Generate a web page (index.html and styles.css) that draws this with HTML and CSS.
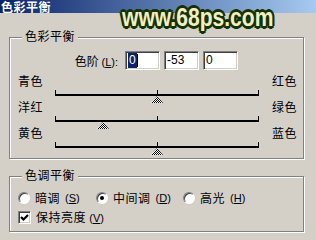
FILE: index.html
```html
<!DOCTYPE html>
<html lang="zh-CN">
<head>
    <meta charset="UTF-8">
    <title>色彩平衡</title>
    <link rel="stylesheet" href="styles.css">
</head>
<body>
    <div class="dialog">
        <div class="titlebar">色彩平衡</div>
        <div class="watermark">www.68ps.com</div>

        <div class="content">
            <div class="group group-balance">
                <div class="group-title">色彩平衡</div>

                <div class="levels">
                    <span class="levels-label">色阶 <span class="key">(<u>L</u>):</span></span>
                    <span class="field"><span class="sel">0</span><span class="caret"></span></span>
                    <span class="field">-53</span>
                    <span class="field">0</span>
                </div>

                <div class="slider">
                    <span class="slider-left">青色</span>
                    <span class="slider-right">红色</span>
                    <div class="track"><span class="thumb" style="left: 50%"></span></div>
                </div>
                <div class="slider">
                    <span class="slider-left">洋红</span>
                    <span class="slider-right">绿色</span>
                    <div class="track"><span class="thumb" style="left: 23.5%"></span></div>
                </div>
                <div class="slider">
                    <span class="slider-left">黄色</span>
                    <span class="slider-right">蓝色</span>
                    <div class="track"><span class="thumb" style="left: 50%"></span></div>
                </div>
            </div>

            <div class="group group-tone">
                <div class="group-title">色调平衡</div>

                <div class="options">
                    <span class="option opt-shadow"><span class="radio"></span>暗调 <span class="key">(<u>S</u>)</span></span>
                    <span class="option opt-mid"><span class="radio checked"></span>中间调 <span class="key">(<u>D</u>)</span></span>
                    <span class="option"><span class="radio"></span>高光 <span class="key">(<u>H</u>)</span></span>
                </div>
                <div class="options options-check">
                    <span class="option">
                        <span class="checkbox">
                            <svg width="11" height="11" viewBox="0 0 11 11">
                                <polyline points="2,5 4.5,7.5 9,3" fill="none" stroke="#000" stroke-width="2.2"/>
                            </svg>
                        </span>
                        <span>保持亮度 <span class="key">(<u>V</u>)</span></span>
                    </span>
                </div>
            </div>
        </div>
    </div>
</body>
</html>
```

FILE: styles.css
```css
body {
    margin: 0;
    background: #d4d0c8;
    font-family: "Noto Sans CJK SC", "Noto Sans", sans-serif;
    font-size: 12px;
    color: #000;
}

.dialog {
    position: relative;
    width: 316px;
    height: 240px;
    overflow: hidden;
}

.titlebar {
    height: 12px;
    padding: 1px 0 0 1px;
    background: linear-gradient(to right, #0a246a, #a6caf0);
    color: #fff;
    font-weight: bold;
    line-height: 12px;
    letter-spacing: 0.5px;
}

/* site watermark sits over the title bar edge */
.watermark {
    position: absolute;
    left: 122px;
    top: 4px;
    font-family: "Liberation Sans", Arial, sans-serif;
    font-size: 26px;
    font-weight: bold;
    line-height: 26px;
    color: #f2efc4;
    transform: scaleX(0.81);
    transform-origin: left top;
    text-shadow:
        2px 0 0 #153300, -2px 0 0 #153300, 0 2px 0 #153300, 0 -2px 0 #153300,
        2px 2px 0 #153300, -2px -2px 0 #153300, 2px -2px 0 #153300, -2px 2px 0 #153300,
        3px 0 0 #153300, -3px 0 0 #153300, 0 3px 0 #153300, 0 -3px 0 #153300;
}

.content {
    padding: 24px 0 0 9px;
}

.group {
    width: 295px;
    box-sizing: border-box;
    border: 1px solid #808080;
    box-shadow: inset 1px 1px 0 #fff, 1px 1px 0 #fff;
}

.group-title {
    width: fit-content;
    margin: -9px 0 0 12px;
    padding: 0 3px;
    background: #d4d0c8;
    line-height: 14px;
    letter-spacing: 0.5px;
}

.key {
    font-family: "Liberation Sans", Arial, sans-serif;
    font-size: 11px;
    letter-spacing: 0;
}

.group-balance {
    padding-bottom: 6px;
}

.levels {
    display: flex;
    align-items: center;
    height: 19px;
    margin-top: 8px;
}

.levels-label {
    width: 108px;
    margin-right: 7px;
    text-align: right;
}

.field {
    width: 35px;
    height: 19px;
    box-sizing: border-box;
    margin-right: 4px;
    padding-left: 2px;
    background: #fff;
    border: 1px solid;
    border-color: #808080 #fff #fff #808080;
    box-shadow: inset 1px 1px 0 #404040, inset -1px -1px 0 #d4d0c8;
    font-family: "Liberation Sans", Arial, sans-serif;
    font-size: 12px;
    line-height: 17px;
    display: flex;
    align-items: center;
}

.sel {
    padding: 0 1px;
    background: #0a246a;
    color: #fff;
    line-height: 15px;
}

.caret {
    width: 1px;
    height: 13px;
    background: #000;
}

.slider {
    display: grid;
    grid-template-columns: 45px 204px auto;
    grid-template-rows: 14px 12px;
    line-height: 14px;
}

.levels + .slider {
    margin-top: 4px;
}

.slider-left {
    padding-left: 8px;
    letter-spacing: 0.5px;
}

.slider-right {
    grid-column: 3;
    padding-left: 13px;
    letter-spacing: 0.5px;
}

.track {
    grid-column: 2;
    grid-row: 2;
    position: relative;
    background:
        linear-gradient(#000, #000) 0 2px / 1px 4px no-repeat,
        linear-gradient(#000, #000) 50% 2px / 1px 4px no-repeat,
        linear-gradient(#000, #000) 100% 2px / 1px 4px no-repeat,
        linear-gradient(#000, #000) 0 6px / 100% 2px no-repeat;
}

.thumb {
    position: absolute;
    top: 8px;
    width: 12px;
    height: 7px;
    margin-left: -6px;
    background: repeating-conic-gradient(#000 0 25%, #fff 0 50%) 0 0 / 2px 2px;
    clip-path: polygon(50% 0, 100% 100%, 0 100%);
}

.group-tone {
    margin-top: 17px;
    padding-bottom: 7px;
}

.options {
    display: flex;
    align-items: center;
    height: 14px;
    margin-top: 9px;
    padding-left: 8px;
    line-height: 14px;
}

.options-check {
    margin-top: 5px;
}

.option {
    display: flex;
    align-items: center;
    gap: 5px;
    letter-spacing: 0.5px;
    white-space: nowrap;
}

.opt-shadow {
    width: 78px;
}

.opt-mid {
    width: 87px;
}

.radio {
    flex: none;
    width: 12px;
    height: 12px;
    box-sizing: border-box;
    border-radius: 50%;
    background: #fff;
    border: 1px solid;
    border-color: #808080 #fff #fff #808080;
    box-shadow: inset 1px 1px 0 #404040;
    display: flex;
    align-items: center;
    justify-content: center;
}

.radio.checked::after {
    content: "";
    width: 4px;
    height: 4px;
    border-radius: 50%;
    background: #000;
}

.checkbox {
    flex: none;
    width: 13px;
    height: 13px;
    box-sizing: border-box;
    background: #fff;
    border: 1px solid;
    border-color: #808080 #fff #fff #808080;
    box-shadow: inset 1px 1px 0 #404040, inset -1px -1px 0 #d4d0c8;
}

.checkbox svg {
    display: block;
}
```
